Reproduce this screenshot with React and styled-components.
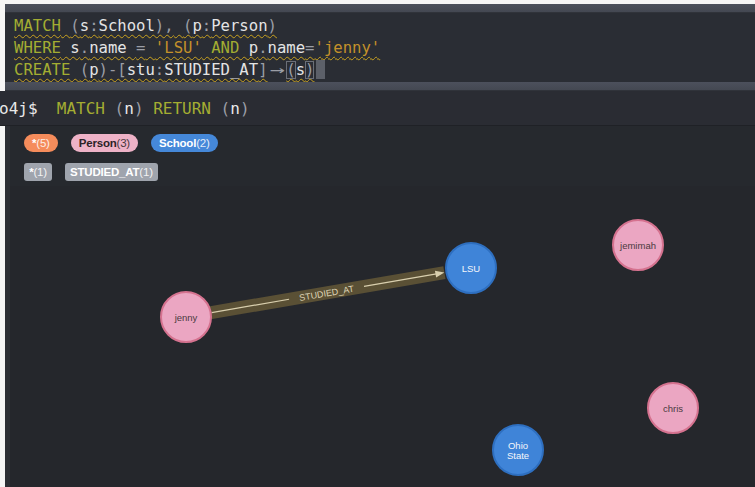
import React from "react";
import styled, { createGlobalStyle } from "styled-components";

const Global = createGlobalStyle`
  html, body { margin: 0; padding: 0; background: #f6f6f6; }
  body { font-family: "Liberation Sans", Arial, sans-serif; overflow: hidden; }
`;

const Page = styled.div`
  width: 755px;
  height: 487px;
  box-sizing: border-box;
  padding: 4px 0 0 5px;
  display: flex;
  flex-direction: column;
  overflow: hidden;
`;

const Bar = styled.div`
  height: 9px;
  flex: none;
  background: linear-gradient(#4c505c, #444852);
  border-bottom: 1px solid #30333a;
  box-sizing: border-box;
`;

const Editor = styled.div`
  height: 69px;
  flex: none;
  background: #2a2d34;
  box-sizing: border-box;
  padding: 2px 0 0 9px;
  font-family: "DejaVu Sans Mono", monospace;
  font-size: 15.6px;
  line-height: 22px;
  white-space: pre;
  color: #e4e4e4;
`;

const Line = styled.span`
  text-decoration: underline wavy #c9a21f;
  text-decoration-thickness: 1px;
  text-underline-offset: 3px;
`;

const Row = styled.div``;

const Kw = styled.span`color: #a4ad32;`;
const Punc = styled.span`color: #9b9ea6;`;
const Str = styled.span`color: #c4912a;`;
const Arrow = styled.span`
  display: inline-block;
  width: 2ch;
  text-align: center;
  color: #9b9ea6;
  transform: scaleX(1.6);
`;
const Match = styled.span`
  outline: 1px solid #6b6f78;
  outline-offset: -1px;
`;
const Cursor = styled.span`
  display: inline-block;
  width: 9px;
  height: 19px;
  margin-left: 2px;
  vertical-align: -4px;
  background: #5c6069;
`;

const Terminal = styled.div`
  height: 35px;
  flex: none;
  background: #2a2c33;
  border-bottom: 1px solid #1f2126;
  box-sizing: border-box;
  display: flex;
  align-items: center;
  margin-left: -5px;
  padding-left: 0;
  font-family: "DejaVu Sans Mono", monospace;
  font-size: 16px;
  color: #e8e8e8;
`;

const Prompt = styled.span`
  white-space: pre;
  margin-left: -1px;
`;

const GraphPanel = styled.div`
  flex: 1;
  display: flex;
  flex-direction: column;
  background: #25272c;
  border-left: 5px solid #2c2f35;
`;

const Legend = styled.div`
  height: 60px;
  flex: none;
  background: #26292e;
  box-sizing: border-box;
  padding: 8px 0 0 14px;
  display: flex;
  flex-direction: column;
  gap: 11px;
`;

const LegendRow = styled.div`
  display: flex;
  gap: 13px;
`;

const Pill = styled.span`
  height: 18px;
  min-width: ${p => (p.$rel ? 28 : 32)}px;
  box-sizing: border-box;
  display: inline-flex;
  align-items: center;
  justify-content: center;
  padding: 0 ${p => (p.$rel ? 5 : 8)}px;
  border-radius: ${p => (p.$rel ? "3px" : "9px")};
  background: ${p => p.$bg};
  color: ${p => p.$fg};
  font-size: 11.5px;
  font-family: "Liberation Sans", Arial, sans-serif;
  letter-spacing: -0.2px;
  b { font-weight: bold; }
  span { font-weight: normal; opacity: 0.85; }
`;

const GraphSvg = styled.svg`
  flex: 1;
  display: block;
  width: 100%;
`;

const nodes = [
  { id: "jenny", x: 176, y: 131, fill: "#eba6c2", stroke: "#d5728f", color: "#4a3a40", lines: ["jenny"] },
  { id: "LSU", x: 461, y: 82, fill: "#3f84d8", stroke: "#2e6fc0", color: "#f4f6fa", lines: ["LSU"] },
  { id: "jemimah", x: 628, y: 59, fill: "#eba6c2", stroke: "#d5728f", color: "#4a3a40", lines: ["jemimah"] },
  { id: "chris", x: 663, y: 222, fill: "#eba6c2", stroke: "#d5728f", color: "#4a3a40", lines: ["chris"] },
  { id: "ohio", x: 508, y: 264, fill: "#3f84d8", stroke: "#2e6fc0", color: "#f4f6fa", lines: ["Ohio", "State"] },
];

function Graph() {
  const a = nodes[0];
  const b = nodes[1];
  const dx = b.x - a.x;
  const dy = b.y - a.y;
  const len = Math.sqrt(dx * dx + dy * dy);
  const ang = (Math.atan2(dy, dx) * 180) / Math.PI;
  const r = 26;
  const start = r;
  const end = len - r - 1;
  const mid = len / 2;
  return (
    <GraphSvg viewBox="0 0 745 300" preserveAspectRatio="xMinYMin meet">
      <g transform={`translate(${a.x} ${a.y}) rotate(${ang})`}>
        <rect x={start - 2} y={-6.5} width={end - start + 2} height={13} fill="#5a5035" />
        <line x1={start} y1={0} x2={mid - 40} y2={0} stroke="#d9cfae" strokeWidth="1.2" />
        <line x1={mid + 36} y1={0} x2={end - 8} y2={0} stroke="#d9cfae" strokeWidth="1.2" />
        <polygon points={`${end},0 ${end - 9},-3.5 ${end - 9},3.5`} fill="#d9cfae" />
        <text
          x={mid - 2}
          y={3.5}
          textAnchor="middle"
          fontFamily="Liberation Sans, Arial, sans-serif"
          fontSize="9"
          fill="#ddd3b4"
        >
          STUDIED_AT
        </text>
      </g>
      {nodes.map(n => (
        <g key={n.id}>
          <circle cx={n.x} cy={n.y} r={25} fill={n.fill} stroke={n.stroke} strokeWidth="2" />
          {n.lines.map((t, i) => (
            <text
              key={t}
              x={n.x}
              y={n.y + 3.5 + (i - (n.lines.length - 1) / 2) * 10}
              textAnchor="middle"
              fontFamily="Liberation Sans, Arial, sans-serif"
              fontSize="9.5"
              fill={n.color}
            >
              {t}
            </text>
          ))}
        </g>
      ))}
    </GraphSvg>
  );
}

export default function App() {
  return (
    <>
      <Global />
      <Page>
        <Bar />
        <Editor>
          <Row>
            <Line>
              <Kw>MATCH</Kw> <Punc>(</Punc>s<Punc>:</Punc>School<Punc>),</Punc> <Punc>(</Punc>p<Punc>:</Punc>Person<Punc>)</Punc>
            </Line>
          </Row>
          <Row>
            <Line>
              <Kw>WHERE</Kw> s<Punc>.</Punc>name <Punc>=</Punc> <Str>'LSU'</Str> <Kw>AND</Kw> p<Punc>.</Punc>name<Punc>=</Punc><Str>'jenny'</Str>
            </Line>
          </Row>
          <Row>
            <Line>
              <Kw>CREATE</Kw> <Punc>(</Punc>p<Punc>)-[</Punc>stu<Punc>:</Punc>STUDIED_AT<Punc>]</Punc><Arrow>→</Arrow><Match><Punc>(</Punc></Match>s<Match><Punc>)</Punc></Match>
            </Line>
            <Cursor />
          </Row>
        </Editor>
        <Bar />
        <Terminal>
          <Prompt>
            o4j$  <Kw>MATCH</Kw> <Punc>(</Punc>n<Punc>)</Punc> <Kw>RETURN</Kw> <Punc>(</Punc>n<Punc>)</Punc>
          </Prompt>
        </Terminal>
        <GraphPanel>
          <Legend>
            <LegendRow>
              <Pill $bg="#f58c5b" $fg="#ffffff"><b>*</b><span>(5)</span></Pill>
              <Pill $bg="#eeb2c7" $fg="#2b2326"><b>Person</b><span>(3)</span></Pill>
              <Pill $bg="#4588d9" $fg="#ffffff"><b>School</b><span>(2)</span></Pill>
            </LegendRow>
            <LegendRow>
              <Pill $rel $bg="#9fa4ad" $fg="#ffffff"><b>*</b><span>(1)</span></Pill>
              <Pill $rel $bg="#9fa4ad" $fg="#ffffff"><b>STUDIED_AT</b><span>(1)</span></Pill>
            </LegendRow>
          </Legend>
          <Graph />
        </GraphPanel>
      </Page>
    </>
  );
}
